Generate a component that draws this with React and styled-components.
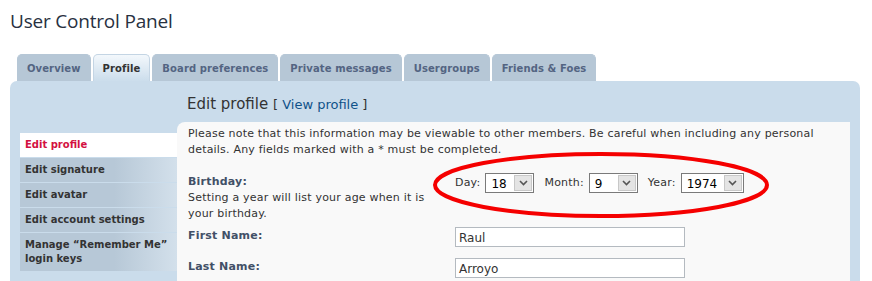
import React from "react";
import styled, { createGlobalStyle } from "styled-components";

const GlobalStyle = createGlobalStyle`
  body {
    margin: 0;
    background: #ffffff;
    font-family: "DejaVu Sans", Verdana, sans-serif;
    font-size: 11px;
    letter-spacing: 0.2px;
    color: #333333;
  }
`;

const tabs = [
  "Overview",
  "Profile",
  "Board preferences",
  "Private messages",
  "Usergroups",
  "Friends & Foes",
];

const menu = [
  "Edit profile",
  "Edit signature",
  "Edit avatar",
  "Edit account settings",
  "Manage \u201cRemember Me\u201d login keys",
];

function Select({ value, width }) {
  return (
    <SelectBox style={{ width }}>
      <SelectValue>{value}</SelectValue>
      <SelectArrow>
        <svg width="9" height="6" viewBox="0 0 9 6">
          <path d="M1 1 L4.5 4.5 L8 1" fill="none" stroke="#555" strokeWidth="1.6" />
        </svg>
      </SelectArrow>
    </SelectBox>
  );
}

export default function App() {
  return (
    <Page>
      <GlobalStyle />
      <Title>User Control Panel</Title>
      <Tabs>
        {tabs.map((t) => (
          <Tab key={t} $active={t === "Profile"}>
            {t}
          </Tab>
        ))}
      </Tabs>
      <Panel>
        <Side>
          {menu.map((m, i) => (
            <MenuItem key={m} $active={i === 0}>
              {m}
            </MenuItem>
          ))}
        </Side>
        <Main>
          <Heading>
            Edit profile <Bracket>[ <a>View profile</a> ]</Bracket>
          </Heading>
          <Content>
            <Note>
              Please note that this information may be viewable to other members. Be careful when
              including any personal details. Any fields marked with a * must be completed.
            </Note>
            <Row $gap={6}>
              <Label>
                <strong>Birthday:</strong>
                <span>Setting a year will list your age when it is your birthday.</span>
              </Label>
              <Field>
                <Inline>
                  Day: <Select value="18" width={49} />
                </Inline>
                <Inline>
                  Month: <Select value="9" width={49} />
                </Inline>
                <Inline>
                  Year: <Select value="1974" width={63} />
                </Inline>
              </Field>
            </Row>
            <Row $gap={12}>
              <Label>
                <strong>First Name:</strong>
              </Label>
              <Field>
                <TextInput>Raul</TextInput>
              </Field>
            </Row>
            <Row $gap={12}>
              <Label>
                <strong>Last Name:</strong>
              </Label>
              <Field>
                <TextInput>Arroyo</TextInput>
              </Field>
            </Row>
          </Content>
        </Main>
        <Circle width="340" height="70" viewBox="0 0 340 70">
          <ellipse cx="170" cy="35" rx="166" ry="31" fill="none" stroke="#f50000" strokeWidth="4" />
        </Circle>
      </Panel>
    </Page>
  );
}

const Page = styled.div`
  padding: 0 12px 0 10px;
  height: 281px;
  overflow: hidden;
`;

const Title = styled.h2`
  margin: 0;
  padding-top: 8px;
  height: 53px;
  box-sizing: border-box;
  font-family: "Open Sans", sans-serif;
  font-weight: 400;
  font-size: 19px;
  letter-spacing: -0.2px;
  color: #28313f;
`;

const Tabs = styled.div`
  display: flex;
  align-items: flex-end;
  gap: 2px;
  margin-left: 7px;
  height: 28px;
`;

const Tab = styled.div`
  height: ${(p) => (p.$active ? 28 : 27)}px;
  box-sizing: border-box;
  padding: 0 9px;
  display: flex;
  align-items: center;
  border-radius: 5px 5px 0 0;
  font-weight: bold;
  font-size: 10px;
  letter-spacing: 0.1px;
  color: ${(p) => (p.$active ? "#333333" : "#536482")};
  background: ${(p) =>
    p.$active ? "linear-gradient(#f3f8fc, #cadceb)" : "#b6c7d6"};
  border: 1px solid ${(p) => (p.$active ? "#c4d5e4" : "#b6c7d6")};
  border-bottom: none;
  margin-bottom: ${(p) => (p.$active ? -1 : 0)}px;
`;

const Panel = styled.div`
  position: relative;
  display: flex;
  background: #cadceb;
  border-radius: 7px 7px 0 0;
  padding: 0 10px;
  height: 200px;
`;

const Side = styled.div`
  width: 157px;
  flex-shrink: 0;
  padding-top: 52px;
  display: flex;
  flex-direction: column;
  gap: 1px;
`;

const MenuItem = styled.div`
  padding: 5px;
  min-height: 14px;
  line-height: 14px;
  font-weight: bold;
  font-size: 10px;
  letter-spacing: 0;
  color: ${(p) => (p.$active ? "#d31141" : "#333333")};
  background: ${(p) =>
    p.$active ? "#ffffff" : "linear-gradient(to right, #b7c8d7 60%, #d3e0eb)"};
`;

const Main = styled.div`
  flex: 1;
  display: flex;
  flex-direction: column;
`;

const Heading = styled.h3`
  margin: 0;
  flex-shrink: 0;
  padding: 14px 0 0 10px;
  height: 41px;
  box-sizing: border-box;
  font-weight: 400;
  font-size: 15px;
  letter-spacing: 0;
  color: #333333;
`;

const Bracket = styled.span`
  font-size: 13px;
  a {
    color: #105289;
  }
`;

const Content = styled.div`
  flex: 1;
  background: #f9f9f9;
  border-radius: 8px 0 0 0;
  padding: 4px 10px 0 11px;
`;

const Note = styled.p`
  margin: 0 0 16px;
  line-height: 16px;
`;

const Row = styled.div`
  display: flex;
  margin-bottom: ${(p) => p.$gap}px;
  line-height: 16px;
`;

const Label = styled.div`
  width: 267px;
  flex-shrink: 0;
  padding-right: 27px;
  box-sizing: border-box;
  display: flex;
  flex-direction: column;
  strong {
    color: #425067;
  }
`;

const Field = styled.div`
  display: flex;
  gap: 10px;
  align-items: center;
  align-self: flex-start;
  margin-top: -1px;
`;

const Inline = styled.span`
  display: flex;
  align-items: center;
  gap: 5px;
`;

const SelectBox = styled.span`
  display: flex;
  height: 20px;
  box-sizing: border-box;
  border: 1px solid #7a7a7a;
  background: #ffffff;
`;

const SelectValue = styled.span`
  flex: 1;
  padding: 2px 0 0 5px;
  font-size: 12px;
  letter-spacing: 0;
  color: #000;
`;

const SelectArrow = styled.span`
  width: 16px;
  margin: 1px;
  background: #e4e4e4;
  border: 1px solid #c8c8c8;
  display: flex;
  align-items: center;
  justify-content: center;
`;

const TextInput = styled.div`
  width: 230px;
  height: 20px;
  box-sizing: border-box;
  border: 1px solid #b4bac0;
  background: #ffffff;
  padding: 2px 3px;
  font-size: 12px;
  letter-spacing: 0;
  color: #333;
`;

const Circle = styled.svg`
  position: absolute;
  left: 421px;
  top: 69px;
  pointer-events: none;
`;
